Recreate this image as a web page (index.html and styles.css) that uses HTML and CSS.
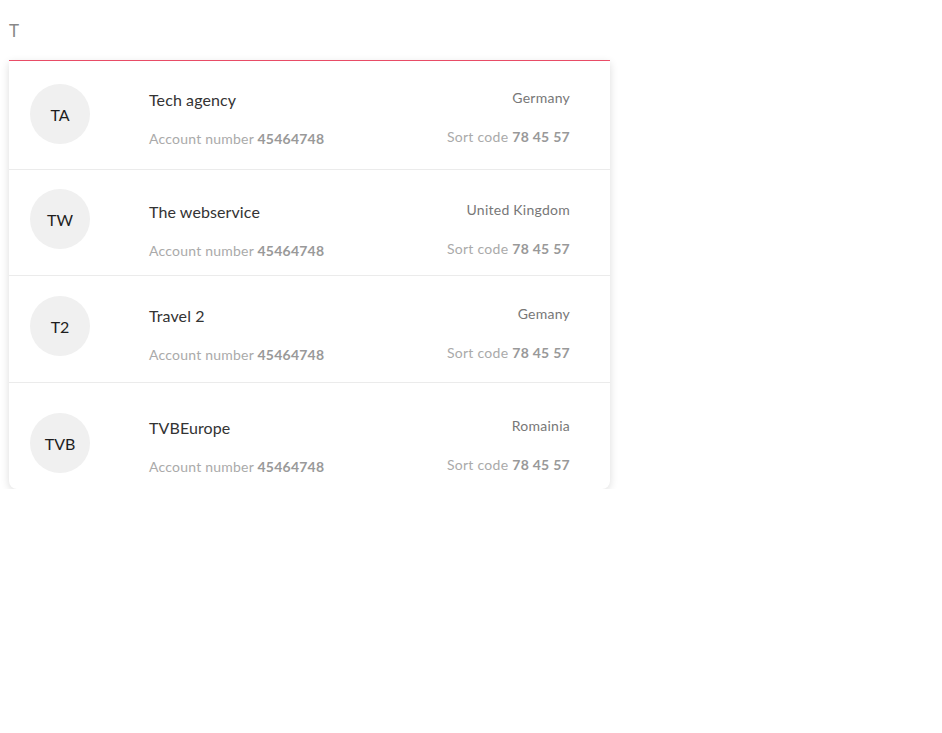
FILE: index.html
```html
<!DOCTYPE html>
<html lang="en">
<head>
<meta charset="utf-8">
<title>Account search</title>
<link rel="stylesheet" href="styles.css">
</head>
<body>
<div class="wrap">
  <div class="search">T</div>
  <ul class="results">
    <li class="row row-1">
      <div class="avatar">TA</div>
      <div class="info">
        <div class="col-left">
          <div class="title">Tech agency</div>
          <div class="meta">Account number <b>45464748</b></div>
        </div>
        <div class="col-right">
          <div class="country">Germany</div>
          <div class="meta">Sort code <b>78 45 57</b></div>
        </div>
      </div>
    </li>
    <li class="row row-2">
      <div class="avatar">TW</div>
      <div class="info">
        <div class="col-left">
          <div class="title">The webservice</div>
          <div class="meta">Account number <b>45464748</b></div>
        </div>
        <div class="col-right">
          <div class="country">United Kingdom</div>
          <div class="meta">Sort code <b>78 45 57</b></div>
        </div>
      </div>
    </li>
    <li class="row row-3">
      <div class="avatar">T2</div>
      <div class="info">
        <div class="col-left">
          <div class="title">Travel 2</div>
          <div class="meta">Account number <b>45464748</b></div>
        </div>
        <div class="col-right">
          <div class="country">Gemany</div>
          <div class="meta">Sort code <b>78 45 57</b></div>
        </div>
      </div>
    </li>
    <li class="row row-4">
      <div class="avatar">TVB</div>
      <div class="info">
        <div class="col-left">
          <div class="title">TVBEurope</div>
          <div class="meta">Account number <b>45464748</b></div>
        </div>
        <div class="col-right">
          <div class="country">Romainia</div>
          <div class="meta">Sort code <b>78 45 57</b></div>
        </div>
      </div>
    </li>
  </ul>
</div>
</body>
</html>
```
FILE: styles.css
```css
* { box-sizing: border-box; }
html, body { margin: 0; padding: 0; background: #fff; }
body {
  font-family: "Lato", "Noto Sans", "Liberation Sans", sans-serif;
  -webkit-font-smoothing: antialiased;
}
.wrap { padding-left: 9px; width: 610px; }
.search {
  height: 61px;
  padding-top: 21px;
  font-size: 17px;
  line-height: 20px;
  color: #888;
  border-bottom: 1px solid #f2506b;
}
.results {
  list-style: none;
  margin: 0;
  padding: 0;
  background: #fff;
  border-radius: 0 0 8px 8px;
  box-shadow: 0 2px 8px rgba(0, 0, 0, 0.14);
}
.row {
  display: flex;
  align-items: flex-start;
  padding: 0 40px 0 21px;
  border-bottom: 1px solid #ebebeb;
}
.row:last-child { border-bottom: none; }
.avatar {
  flex: none;
  width: 60px;
  height: 60px;
  border-radius: 50%;
  background: #f0f0f0;
  color: #1e1e1e;
  font-size: 16px;
  display: flex;
  align-items: center;
  justify-content: center;
}
.info {
  flex: 1;
  display: flex;
  justify-content: space-between;
  margin-left: 59px;
}
.col-left, .col-right {
  display: flex;
  flex-direction: column;
  gap: 19px;
}
.col-right { text-align: right; margin-top: -2px; align-items: flex-end; }
.title {
  font-size: 16px;
  line-height: 20px;
  color: #333;
  letter-spacing: 0.1px;
}
.country {
  font-size: 14px;
  line-height: 20px;
  color: #777;
  letter-spacing: 0.25px;
}
.meta {
  font-size: 14px;
  line-height: 20px;
  color: #aaa;
  letter-spacing: 0.22px;
}
.col-right .meta { letter-spacing: 0.28px; }
.meta b { font-weight: 700; color: #999; }

.row-1 { height: 109px; }
.row-1 .avatar { margin-top: 23px; }
.row-1 .info { margin-top: 29px; }
.row-2 { height: 106px; }
.row-2 .avatar { margin-top: 19px; }
.row-2 .info { margin-top: 32px; }
.row-3 { height: 107px; }
.row-3 .avatar { margin-top: 20px; }
.row-3 .info { margin-top: 30px; }
.row-4 { height: 106px; }
.row-4 .avatar { margin-top: 30px; }
.row-4 .info { margin-top: 35px; }
```
